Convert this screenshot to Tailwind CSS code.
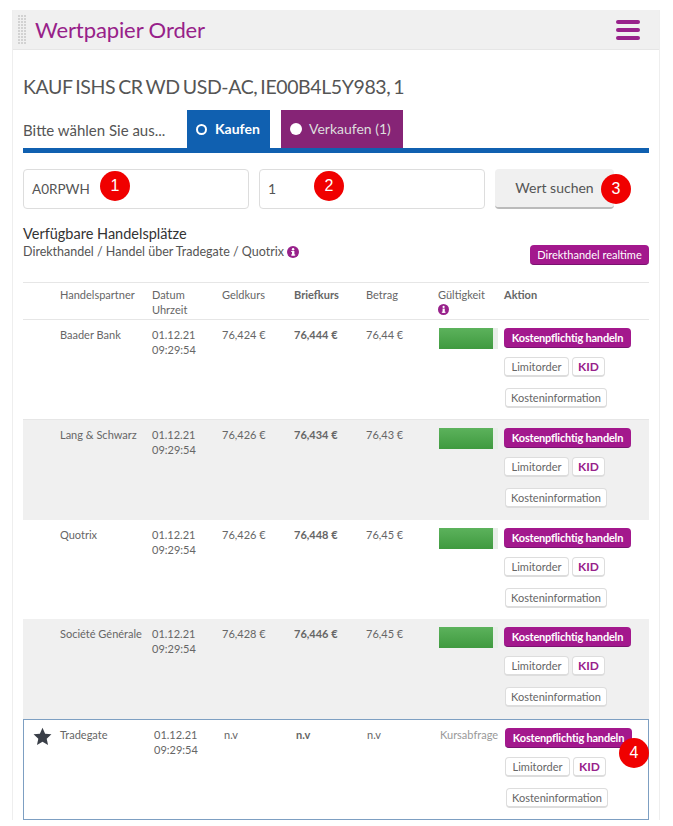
<!DOCTYPE html>
<html lang="de">
  <head>
    <meta charset="UTF-8" />
    <title>Wertpapier Order</title>
    <script src="https://cdn.jsdelivr.net/npm/@tailwindcss/browser@4"></script>
  </head>
  <body class="bg-white font-['Lato',sans-serif] text-[#555]">
    <div class="ml-3 mt-[10px] w-[648px] border-x border-[#eeeeee]">
      <!-- Header -->
      <div class="flex h-10 items-center border-b border-[#e6e6e6] bg-[#f0f0f0]">
        <div class="ml-[5px] grid grid-cols-3 gap-[1px]">
          <i class="size-[2px] bg-[#d2d2d2]"></i><i class="size-[2px] bg-[#d2d2d2]"></i><i class="size-[2px] bg-[#d2d2d2]"></i>
          <i class="size-[2px] bg-[#d2d2d2]"></i><i class="size-[2px] bg-[#d2d2d2]"></i><i class="size-[2px] bg-[#d2d2d2]"></i>
          <i class="size-[2px] bg-[#d2d2d2]"></i><i class="size-[2px] bg-[#d2d2d2]"></i><i class="size-[2px] bg-[#d2d2d2]"></i>
          <i class="size-[2px] bg-[#d2d2d2]"></i><i class="size-[2px] bg-[#d2d2d2]"></i><i class="size-[2px] bg-[#d2d2d2]"></i>
          <i class="size-[2px] bg-[#d2d2d2]"></i><i class="size-[2px] bg-[#d2d2d2]"></i><i class="size-[2px] bg-[#d2d2d2]"></i>
          <i class="size-[2px] bg-[#d2d2d2]"></i><i class="size-[2px] bg-[#d2d2d2]"></i><i class="size-[2px] bg-[#d2d2d2]"></i>
          <i class="size-[2px] bg-[#d2d2d2]"></i><i class="size-[2px] bg-[#d2d2d2]"></i><i class="size-[2px] bg-[#d2d2d2]"></i>
          <i class="size-[2px] bg-[#d2d2d2]"></i><i class="size-[2px] bg-[#d2d2d2]"></i><i class="size-[2px] bg-[#d2d2d2]"></i>
          <i class="size-[2px] bg-[#d2d2d2]"></i><i class="size-[2px] bg-[#d2d2d2]"></i><i class="size-[2px] bg-[#d2d2d2]"></i>
          <i class="size-[2px] bg-[#d2d2d2]"></i><i class="size-[2px] bg-[#d2d2d2]"></i><i class="size-[2px] bg-[#d2d2d2]"></i>
        </div>
        <h2 class="ml-[9px] text-[22px] leading-none tracking-[-0.1px] text-[#972189]">Wertpapier Order</h2>
        <div class="ml-auto mr-[19px] flex w-6 flex-col gap-1">
          <span class="h-1 rounded-full bg-[#98218b]"></span>
          <span class="h-1 rounded-full bg-[#98218b]"></span>
          <span class="h-1 rounded-full bg-[#98218b]"></span>
        </div>
      </div>

      <div class="px-[10px]">
        <h1 class="mt-[25px] text-[19.5px] leading-6 tracking-[-0.4px] [word-spacing:-1.5px] text-[#555]">KAUF ISHS CR WD USD-AC, IE00B4L5Y983, 1</h1>

        <!-- Tabs -->
        <div class="mt-[11px] flex h-[43px] items-start border-b-[5px] border-[#1060b0]">
          <span class="w-[164px] pt-[10px] text-[15px] leading-5">Bitte wählen Sie aus...</span>
          <div class="flex h-[38px] w-[83px] items-center gap-[8px] bg-[#1060b0] pl-[9px] text-sm font-bold text-white">
            <span class="size-[11px] rounded-full border-2 border-white bg-[#1060b0]"></span>
            Kaufen
          </div>
          <div class="ml-[11px] flex h-[38px] w-[122px] items-center gap-[7px] bg-[#862476] pl-[9px] text-sm text-[#ddd]">
            <span class="size-3 rounded-full bg-white"></span>
            Verkaufen (1)
          </div>
        </div>

        <!-- Search -->
        <div class="mt-4 flex gap-[10px]">
          <div class="relative flex h-10 w-[226px] items-center rounded border border-[#ddd] pl-2 text-[13.5px]">
            A0RPWH
            <span class="absolute left-[76px] top-[1px] flex size-[30px] items-center justify-center rounded-full bg-[#f00000] font-['Liberation_Sans',sans-serif] text-base text-white">1</span>
          </div>
          <div class="relative flex h-10 w-[226px] items-center rounded border border-[#ddd] pl-2 text-sm">
            1
            <span class="absolute left-[54px] top-[1px] flex size-[30px] items-center justify-center rounded-full bg-[#f00000] font-['Liberation_Sans',sans-serif] text-base text-white">2</span>
          </div>
          <div class="relative flex h-10 w-[119px] items-center justify-center rounded border-b-2 border-[#bbb] bg-[#f0f0f0] text-sm">
            Wert suchen
            <span class="absolute left-[106px] top-[5px] flex size-[30px] items-center justify-center rounded-full bg-[#f00000] font-['Liberation_Sans',sans-serif] text-base text-white">3</span>
          </div>
        </div>

        <!-- Heading row -->
        <div class="mt-4 flex items-start justify-between">
          <div>
            <div class="text-[14.5px] leading-[17px] text-[#333]">Verfügbare Handelsplätze</div>
            <div class="mt-[1px] flex items-center gap-[3px] text-[12.5px] leading-[17px]">
              Direkthandel / Handel über Tradegate / Quotrix
              <svg class="size-3" viewBox="0 0 12 12"><circle cx="6" cy="6" r="6" fill="#98218b"/><rect x="5" y="5" width="2.4" height="4.4" fill="#fff"/><rect x="4.2" y="8.4" width="4" height="1.2" fill="#fff"/><rect x="4.2" y="5" width="2" height="1" fill="#fff"/><circle cx="6.1" cy="3.2" r="1.2" fill="#fff"/></svg>
            </div>
          </div>
          <span class="mt-5 h-5 w-[119px] rounded border-b border-[#7a1270] bg-[#a3188d] text-center text-[11px] leading-[19px] text-white">Direkthandel realtime</span>
        </div>

        <!-- Table -->
        <div class="mt-[17px] text-[11px] leading-[15px] text-[#666]">
          <div class="grid h-[38px] grid-cols-[37px_92px_70px_72px_72px_72px_66px_1fr] border-y border-[#e6e6e6] pt-1">
            <div></div>
            <div>Handelspartner</div>
            <div>Datum<br />Uhrzeit</div>
            <div>Geldkurs</div>
            <div class="font-bold">Briefkurs</div>
            <div>Betrag</div>
            <div>Gültigkeit<br /><svg class="mt-[2px] size-[11px]" viewBox="0 0 12 12"><circle cx="6" cy="6" r="6" fill="#98218b"/><rect x="5" y="5" width="2.4" height="4.4" fill="#fff"/><rect x="4.2" y="8.4" width="4" height="1.2" fill="#fff"/><circle cx="6.1" cy="3.2" r="1.2" fill="#fff"/></svg></div>
            <div class="font-bold">Aktion</div>
          </div>

          <div class="grid h-[100px] grid-cols-[37px_92px_70px_72px_72px_72px_66px_1fr] border-b border-[#e6e6e6] pt-[7px]">
            <div></div>
            <div>Baader Bank</div>
            <div>01.12.21<br />09:29:54</div>
            <div>76,424 €</div>
            <div class="font-bold">76,444 €</div>
            <div>76,44 €</div>
            <div class="ml-px mt-px h-[21px] w-[59px] bg-[#e8eee8]"><div class="h-full w-[54px] bg-gradient-to-b from-[#5cb25c] to-[#3f9a3f]"></div></div>
            <div class="mt-px">
              <span class="inline-block h-5 w-[127px] rounded border-b border-[#7a1270] bg-[#a3188d] text-center text-[11px] leading-[19px] font-bold tracking-[-0.2px] text-white">Kostenpflichtig handeln</span>
              <div class="mt-[9px] flex gap-[3px]"><span class="h-5 w-[65px] rounded border border-[#ddd] border-b-2 bg-white text-center leading-[17px]">Limitorder</span><span class="h-5 w-[33px] rounded border border-[#ddd] border-b-2 bg-white text-center text-xs leading-[17px] font-bold text-[#98218b]">KID</span></div>
              <span class="mt-[11px] ml-px block h-5 w-[102px] rounded border border-[#ddd] border-b-2 bg-white text-center leading-[17px]">Kosteninformation</span>
            </div>
          </div>

          <div class="grid h-[100px] grid-cols-[37px_92px_70px_72px_72px_72px_66px_1fr] bg-[#f0f0f0] pt-[7px]">
            <div></div>
            <div>Lang &amp; Schwarz</div>
            <div>01.12.21<br />09:29:54</div>
            <div>76,426 €</div>
            <div class="font-bold">76,434 €</div>
            <div>76,43 €</div>
            <div class="ml-px mt-px h-[21px] w-[59px] bg-[#e8eee8]"><div class="h-full w-[54px] bg-gradient-to-b from-[#5cb25c] to-[#3f9a3f]"></div></div>
            <div class="mt-px">
              <span class="inline-block h-5 w-[127px] rounded border-b border-[#7a1270] bg-[#a3188d] text-center text-[11px] leading-[19px] font-bold tracking-[-0.2px] text-white">Kostenpflichtig handeln</span>
              <div class="mt-[9px] flex gap-[3px]"><span class="h-5 w-[65px] rounded border border-[#ddd] border-b-2 bg-white text-center leading-[17px]">Limitorder</span><span class="h-5 w-[33px] rounded border border-[#ddd] border-b-2 bg-white text-center text-xs leading-[17px] font-bold text-[#98218b]">KID</span></div>
              <span class="mt-[11px] ml-px block h-5 w-[102px] rounded border border-[#ddd] border-b-2 bg-white text-center leading-[17px]">Kosteninformation</span>
            </div>
          </div>

          <div class="grid h-[99px] grid-cols-[37px_92px_70px_72px_72px_72px_66px_1fr] pt-[7px]">
            <div></div>
            <div>Quotrix</div>
            <div>01.12.21<br />09:29:54</div>
            <div>76,426 €</div>
            <div class="font-bold">76,448 €</div>
            <div>76,45 €</div>
            <div class="ml-px mt-px h-[21px] w-[59px] bg-[#e8eee8]"><div class="h-full w-[54px] bg-gradient-to-b from-[#5cb25c] to-[#3f9a3f]"></div></div>
            <div class="mt-px">
              <span class="inline-block h-5 w-[127px] rounded border-b border-[#7a1270] bg-[#a3188d] text-center text-[11px] leading-[19px] font-bold tracking-[-0.2px] text-white">Kostenpflichtig handeln</span>
              <div class="mt-[9px] flex gap-[3px]"><span class="h-5 w-[65px] rounded border border-[#ddd] border-b-2 bg-white text-center leading-[17px]">Limitorder</span><span class="h-5 w-[33px] rounded border border-[#ddd] border-b-2 bg-white text-center text-xs leading-[17px] font-bold text-[#98218b]">KID</span></div>
              <span class="mt-[11px] ml-px block h-5 w-[102px] rounded border border-[#ddd] border-b-2 bg-white text-center leading-[17px]">Kosteninformation</span>
            </div>
          </div>

          <div class="grid h-[100px] grid-cols-[37px_92px_70px_72px_72px_72px_66px_1fr] bg-[#f0f0f0] pt-[7px]">
            <div></div>
            <div>Société Générale</div>
            <div>01.12.21<br />09:29:54</div>
            <div>76,428 €</div>
            <div class="font-bold">76,446 €</div>
            <div>76,45 €</div>
            <div class="ml-px mt-px h-[21px] w-[59px] bg-[#e8eee8]"><div class="h-full w-[54px] bg-gradient-to-b from-[#5cb25c] to-[#3f9a3f]"></div></div>
            <div class="mt-px">
              <span class="inline-block h-5 w-[127px] rounded border-b border-[#7a1270] bg-[#a3188d] text-center text-[11px] leading-[19px] font-bold tracking-[-0.2px] text-white">Kostenpflichtig handeln</span>
              <div class="mt-[9px] flex gap-[3px]"><span class="h-5 w-[65px] rounded border border-[#ddd] border-b-2 bg-white text-center leading-[17px]">Limitorder</span><span class="h-5 w-[33px] rounded border border-[#ddd] border-b-2 bg-white text-center text-xs leading-[17px] font-bold text-[#98218b]">KID</span></div>
              <span class="mt-[11px] ml-px block h-5 w-[102px] rounded border border-[#ddd] border-b-2 bg-white text-center leading-[17px]">Kosteninformation</span>
            </div>
          </div>

          <div class="grid h-[101px] grid-cols-[36px_94px_70px_72px_71px_73px_65px_1fr] border border-[#7d9fc2] pt-[7px]">
            <div class="pl-[9px]">
              <svg class="size-[19px]" viewBox="0 0 24 24"><path d="M12 1l3.3 7.4 8 .9-6 5.4 1.7 7.9L12 18.6l-7 4 1.7-7.9-6-5.4 8-.9z" fill="#3a3f48"/></svg>
            </div>
            <div>Tradegate</div>
            <div>01.12.21<br />09:29:54</div>
            <div>n.v</div>
            <div class="font-bold">n.v</div>
            <div>n.v</div>
            <div class="text-[#999]">Kursabfrage</div>
            <div class="relative mt-px">
              <span class="inline-block h-5 w-[127px] rounded border-b border-[#7a1270] bg-[#a3188d] text-center text-[11px] leading-[19px] font-bold tracking-[-0.2px] text-white">Kostenpflichtig handeln</span>
              <span class="absolute left-[114px] top-[10px] flex size-[30px] items-center justify-center rounded-full bg-[#f00000] font-['Liberation_Sans',sans-serif] text-base text-white">4</span>
              <div class="mt-[9px] flex gap-[3px]"><span class="h-5 w-[65px] rounded border border-[#ddd] border-b-2 bg-white text-center leading-[17px]">Limitorder</span><span class="h-5 w-[33px] rounded border border-[#ddd] border-b-2 bg-white text-center text-xs leading-[17px] font-bold text-[#98218b]">KID</span></div>
              <span class="mt-[11px] ml-px block h-5 w-[102px] rounded border border-[#ddd] border-b-2 bg-white text-center leading-[17px]">Kosteninformation</span>
            </div>
          </div>
        </div>
      </div>
    </div>
  </body>
</html>
